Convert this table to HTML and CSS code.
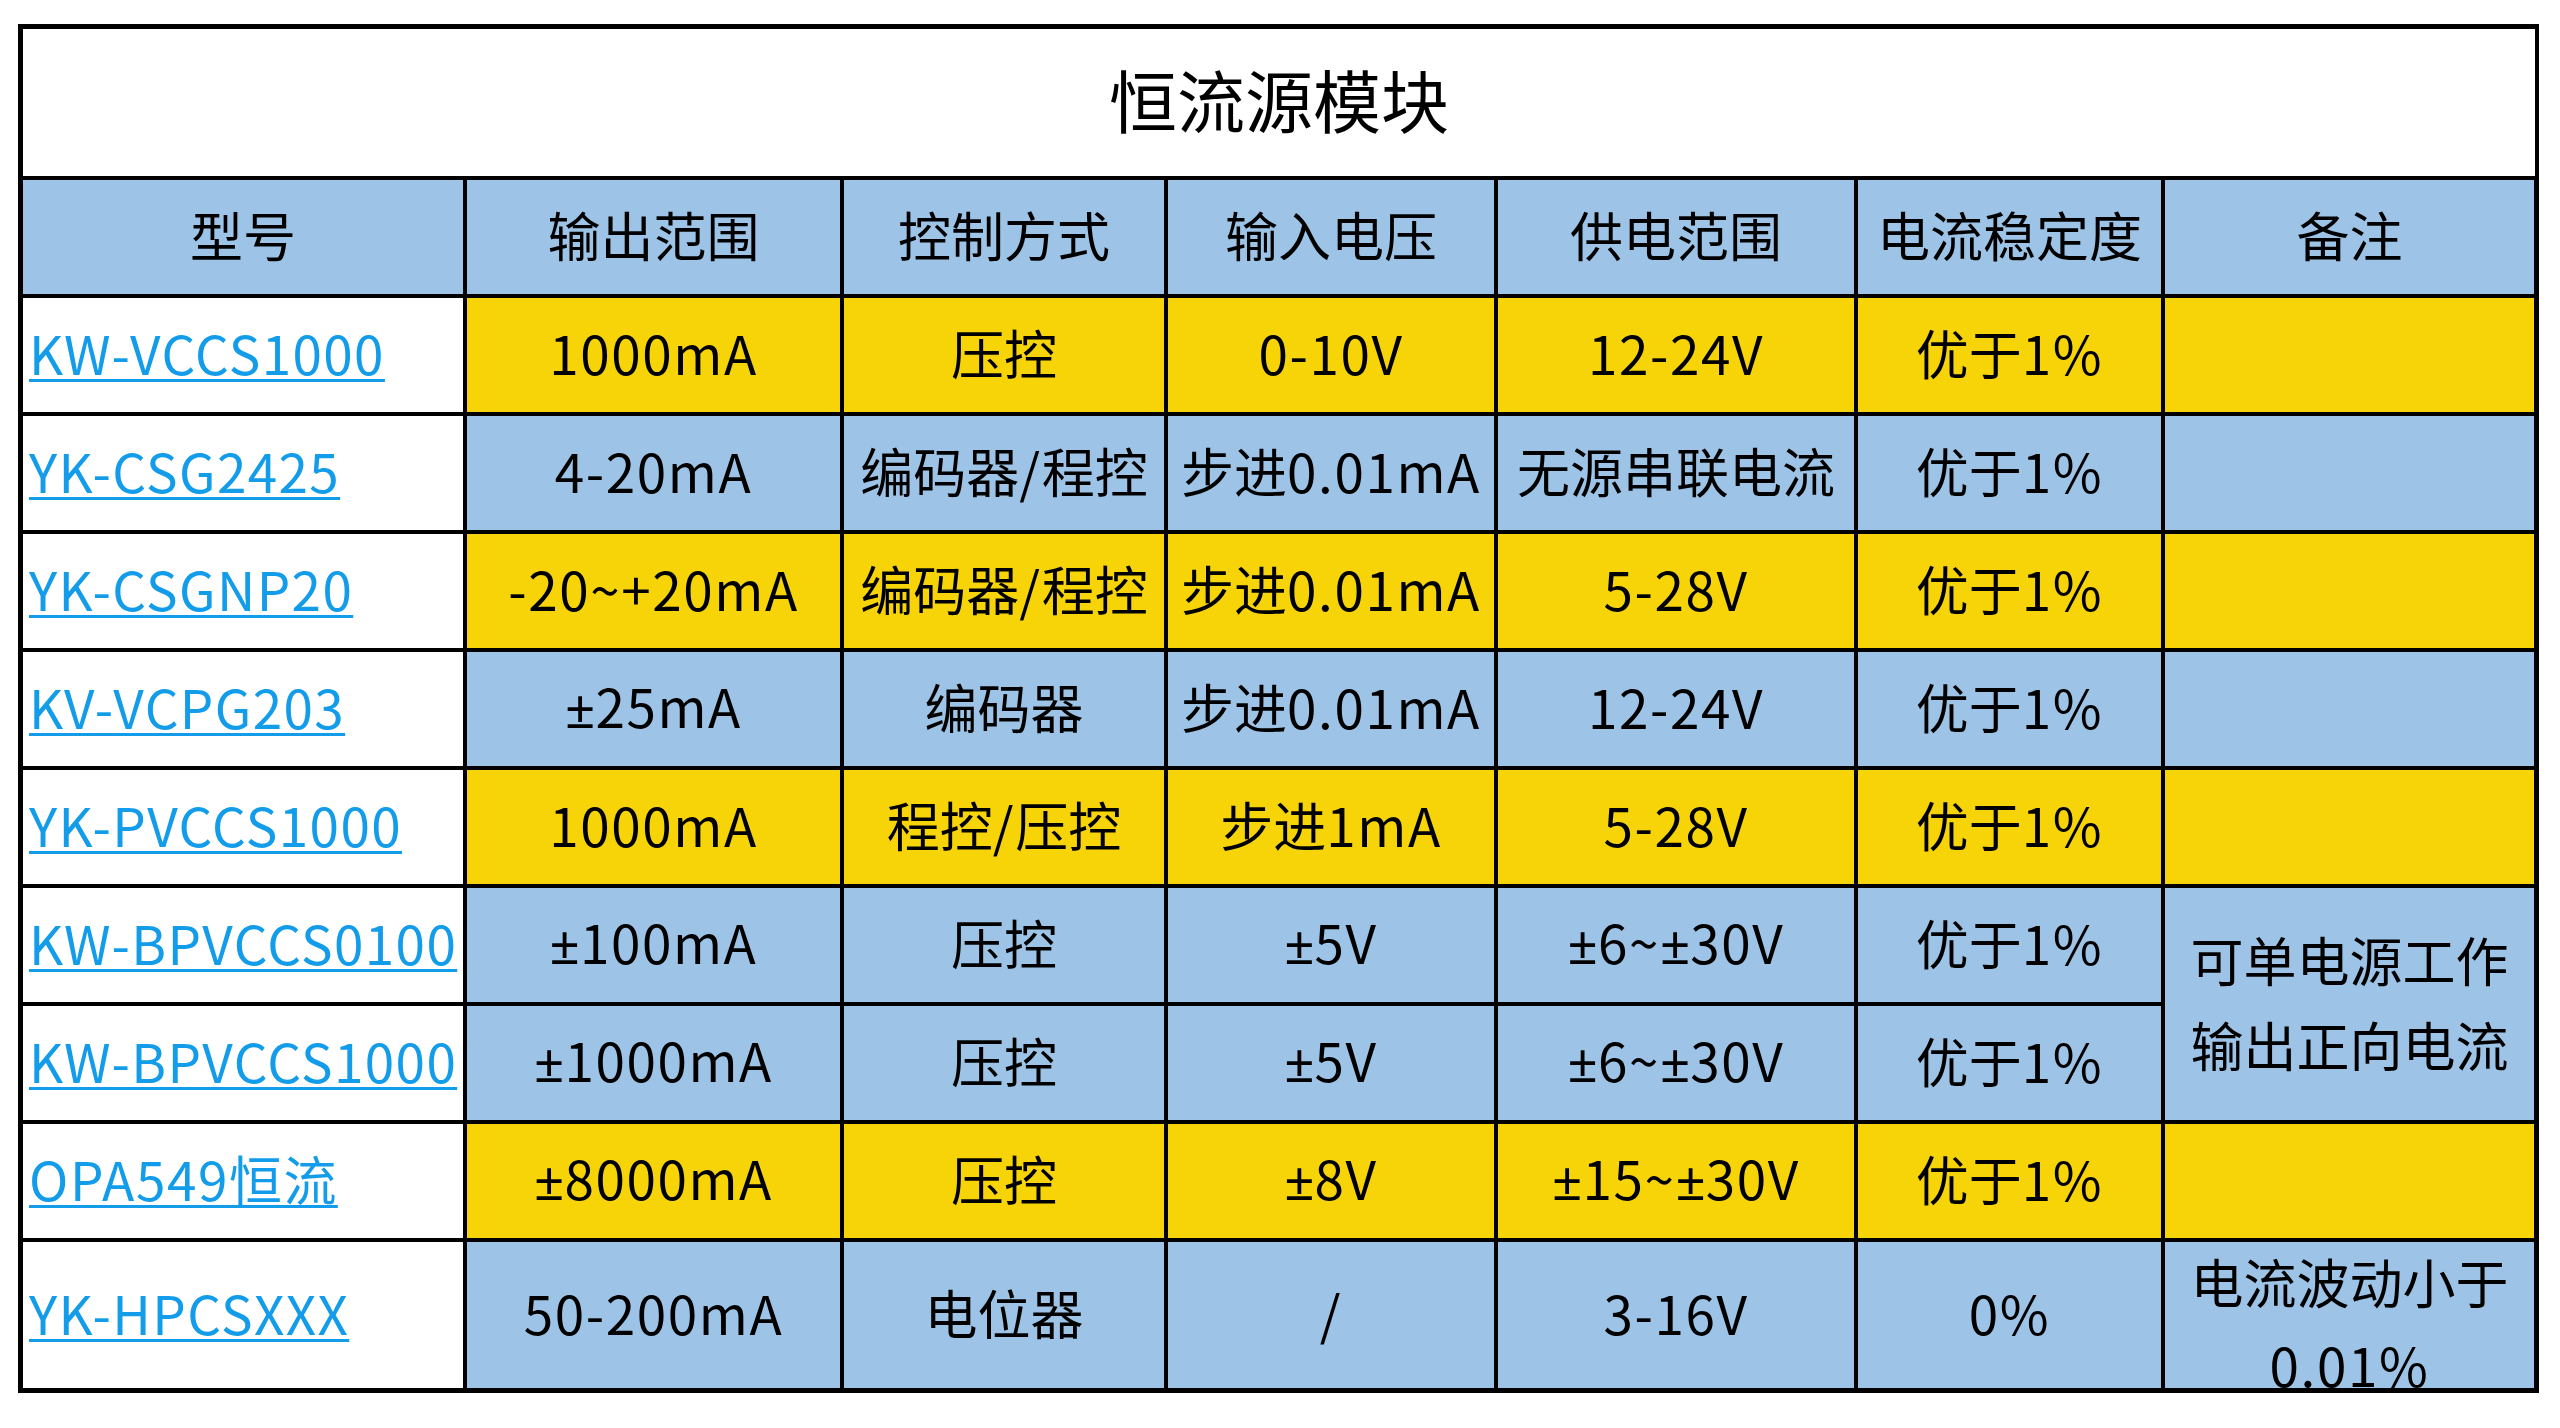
FILE: index.html
```html
<!DOCTYPE html>
<html lang="zh-CN">
<head>
<meta charset="utf-8">
<title>恒流源模块</title>
<link rel="stylesheet" href="styles.css">
</head>
<body>
<div class="sheet">
<table class="grid">
  <colgroup>
    <col class="c-model"><col class="c-range"><col class="c-ctrl"><col class="c-in"><col class="c-supply"><col class="c-stab"><col class="c-note">
  </colgroup>
  <tr class="title-row"><td colspan="7" class="title">恒流源模块</td></tr>
  <tr class="head">
    <th>型号</th><th>输出范围</th><th>控制方式</th><th>输入电压</th><th>供电范围</th><th>电流稳定度</th><th class="note">备注</th>
  </tr>
  <tr class="yellow">
    <td class="model"><a href="#">KW-VCCS1000</a></td><td><span class="lt">1000mA</span></td><td>压控</td><td><span class="lt">0-10V</span></td><td><span class="lt">12-24V</span></td><td>优于<span class="lt">1%</span></td><td class="note"></td>
  </tr>
  <tr class="blue">
    <td class="model"><a href="#">YK-CSG2425</a></td><td><span class="lt">4-20mA</span></td><td>编码器<span class="lt">/</span>程控</td><td>步进<span class="lt">0.01mA</span></td><td>无源串联电流</td><td>优于<span class="lt">1%</span></td><td class="note"></td>
  </tr>
  <tr class="yellow">
    <td class="model"><a href="#">YK-CSGNP20</a></td><td><span class="lt">-20~+20mA</span></td><td>编码器<span class="lt">/</span>程控</td><td>步进<span class="lt">0.01mA</span></td><td><span class="lt">5-28V</span></td><td>优于<span class="lt">1%</span></td><td class="note"></td>
  </tr>
  <tr class="blue">
    <td class="model"><a href="#">KV-VCPG203</a></td><td><span class="lt"><span class="pm">±</span>25mA</span></td><td>编码器</td><td>步进<span class="lt">0.01mA</span></td><td><span class="lt">12-24V</span></td><td>优于<span class="lt">1%</span></td><td class="note"></td>
  </tr>
  <tr class="yellow">
    <td class="model"><a href="#">YK-PVCCS1000</a></td><td><span class="lt">1000mA</span></td><td>程控<span class="lt">/</span>压控</td><td>步进<span class="lt">1mA</span></td><td><span class="lt">5-28V</span></td><td>优于<span class="lt">1%</span></td><td class="note"></td>
  </tr>
  <tr class="blue">
    <td class="model"><a href="#">KW-BPVCCS0100</a></td><td><span class="lt"><span class="pm">±</span>100mA</span></td><td>压控</td><td><span class="lt"><span class="pm">±</span>5V</span></td><td><span class="lt"><span class="pm">±</span>6~<span class="pm">±</span>30V</span></td><td>优于<span class="lt">1%</span></td>
    <td class="note" rowspan="2"><div class="lines">可单电源工作<br>输出正向电流</div></td>
  </tr>
  <tr class="blue">
    <td class="model"><a href="#">KW-BPVCCS1000</a></td><td><span class="lt"><span class="pm">±</span>1000mA</span></td><td>压控</td><td><span class="lt"><span class="pm">±</span>5V</span></td><td><span class="lt"><span class="pm">±</span>6~<span class="pm">±</span>30V</span></td><td>优于<span class="lt">1%</span></td>
  </tr>
  <tr class="yellow">
    <td class="model"><a href="#"><span class="lt">OPA549</span>恒流</a></td><td><span class="lt"><span class="pm">±</span>8000mA</span></td><td>压控</td><td><span class="lt"><span class="pm">±</span>8V</span></td><td><span class="lt"><span class="pm">±</span>15~<span class="pm">±</span>30V</span></td><td>优于<span class="lt">1%</span></td><td class="note"></td>
  </tr>
  <tr class="blue last">
    <td class="model"><a href="#">YK-HPCSXXX</a></td><td><span class="lt">50-200mA</span></td><td>电位器</td><td><span class="lt">/</span></td><td><span class="lt">3-16V</span></td><td><span class="lt">0%</span></td>
    <td class="note"><div class="lines tight">电流波动小于<br><span class="lt">0.01%</span></div></td>
  </tr>
</table>
</div>
</body>
</html>
```

FILE: styles.css
```css
* {
  box-sizing: border-box;
}

body {
  margin: 0;
  background: #ffffff;
  font-family: "Noto Sans CJK SC", "Noto Sans", sans-serif;
  color: #000000;
}

.sheet {
  padding: 24px 0 0 18px;
}

.grid {
  border-collapse: separate;
  border-spacing: 0;
  table-layout: fixed;
  width: 2521px;
  border-left: 5px solid #000;
  border-top: 5px solid #000;
}

.c-model { width: 444px; }
.c-range { width: 377px; }
.c-ctrl { width: 324px; }
.c-in { width: 330px; }
.c-supply { width: 360px; }
.c-stab { width: 307px; }
.c-note { width: 374px; }

.grid td,
.grid th {
  border-right: 4px solid #000;
  border-bottom: 4px solid #000;
  padding: 0 0 5px;
  height: 118px;
  text-align: center;
  vertical-align: middle;
  font-size: 53px;
  font-weight: 400;
  line-height: 1.2;
  white-space: nowrap;
  color: #000;
}

.grid .note {
  border-right-width: 5px;
}

.grid .title {
  height: 151px;
  font-size: 68px;
  padding-bottom: 7px;
  background: #ffffff;
}

.head th {
  background: #9dc3e6;
}

.yellow td {
  background: #f7d408;
}

.blue td {
  background: #9dc3e6;
}

.lt {
  font-family: "Noto Sans CJK JP", "Noto Sans CJK SC", sans-serif;
  letter-spacing: 1.6px;
}

.pm {
  font-family: "Noto Sans", "Liberation Sans", sans-serif;
  letter-spacing: 0;
}

.grid .model {
  background: #ffffff;
  text-align: left;
  padding-left: 6px;
}

.model a {
  font-family: "Noto Sans CJK JP", "Noto Sans CJK SC", sans-serif;
  color: #129ce9;
  letter-spacing: 1.4px;
  text-decoration: underline;
  text-decoration-thickness: 3px;
  text-underline-offset: 4px;
}

.last td {
  height: 151px;
  border-bottom-width: 5px;
}

.lines {
  line-height: 85px;
}

.lines.tight {
  line-height: 83px;
  margin: -4px 0 -24px;
}
```
